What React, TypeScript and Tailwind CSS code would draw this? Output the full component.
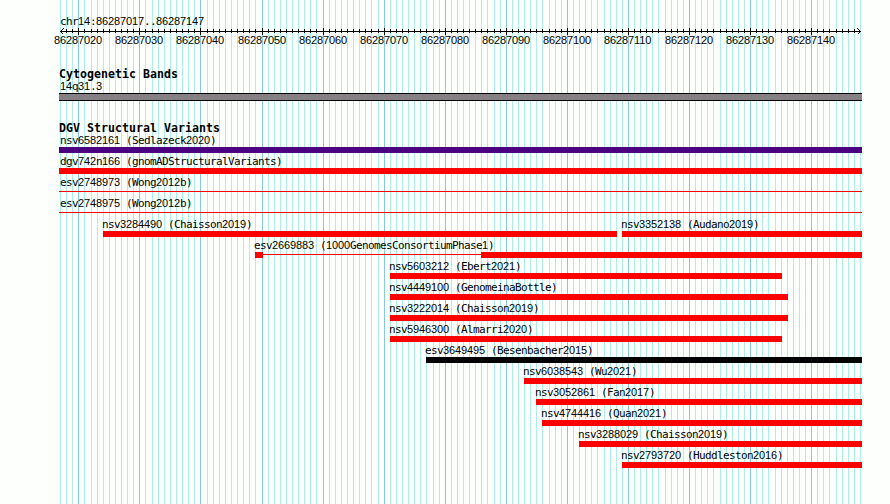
type Block = { from: number; to: number };
type Feature = { name: string; at: number; color: string; blocks: Block[]; line?: Block };

const ORIGIN = 60;
const SCALE = 800 / 131;
const bases = Array.from({ length: 132 }, (_, i) => i);
const xOf = (i: number) => Math.round(ORIGIN + i * SCALE);

const one = (name: string, from: number, to = 862, color = 'bg-[#ff0000]'): Feature => ({
  name,
  at: from,
  color,
  blocks: [{ from, to }],
});

const rows: Feature[][] = [
  [one('nsv6582161 (Sedlazeck2020)', 59, 862, 'bg-[#4b0082]')],
  [one('dgv742n166 (gnomADStructuralVariants)', 59)],
  [{ name: 'esv2748973 (Wong2012b)', at: 59, color: 'bg-[#ff0000]', blocks: [], line: { from: 59, to: 862 } }],
  [{ name: 'esv2748975 (Wong2012b)', at: 59, color: 'bg-[#ff0000]', blocks: [], line: { from: 59, to: 862 } }],
  [one('nsv3284490 (Chaisson2019)', 103, 617), one('nsv3352138 (Audano2019)', 622)],
  [
    {
      name: 'esv2669883 (1000GenomesConsortiumPhase1)',
      at: 255,
      color: 'bg-[#ff0000]',
      blocks: [
        { from: 255, to: 263 },
        { from: 481, to: 862 },
      ],
      line: { from: 263, to: 481 },
    },
  ],
  [one('nsv5603212 (Ebert2021)', 390, 782)],
  [one('nsv4449100 (GenomeinaBottle)', 390, 788)],
  [one('nsv3222014 (Chaisson2019)', 390, 788)],
  [one('nsv5946300 (Almarri2020)', 390, 782)],
  [one('esv3649495 (Besenbacher2015)', 426, 862, 'bg-[#000000]')],
  [one('nsv6038543 (Wu2021)', 524)],
  [one('nsv3052861 (Fan2017)', 536)],
  [one('nsv4744416 (Quan2021)', 542)],
  [one('nsv3288029 (Chaisson2019)', 579)],
  [one('nsv2793720 (Huddleston2016)', 622)],
];

// Digits use a face with an open zero, set to the same 6px pitch as the letters.
function Label({ text }: { text: string }) {
  return (
    <span className="block whitespace-pre font-['DejaVu_Sans_Mono',monospace] text-[11px] leading-[17px] tracking-[-0.622px] text-black">
      {text.split(/(\d+)/).map((part, i) =>
        i % 2 ? (
          <span key={i} className="font-['Liberation_Sans',sans-serif] tracking-[-0.117px]">
            {part}
          </span>
        ) : (
          part
        ),
      )}
    </span>
  );
}

function Title({ children }: { children: string }) {
  return (
    <h2 className="ml-[59px] h-[13px] whitespace-pre font-['DejaVu_Sans_Mono',monospace] text-[11.6px] font-bold leading-[15px] tracking-[0.017px] text-black">
      {children}
    </h2>
  );
}

function GridLines() {
  return (
    <svg className="absolute inset-0" width="890" height="504" shapeRendering="crispEdges">
      {bases.map((i) => (
        <rect key={i} x={xOf(i)} y="0" width="1" height="504" fill={i % 10 === 3 ? '#84c8ec' : '#aceeea'} />
      ))}
    </svg>
  );
}

function Axis() {
  return (
    <svg className="block" width="890" height="8" shapeRendering="crispEdges">
      <rect x="60" y="3" width="801" height="1" />
      {bases.slice(1, -1).map((i) => (
        <rect key={i} x={xOf(i)} y={i % 10 === 3 ? 0 : 1} width="1" height={i % 10 === 3 ? 7 : 4} />
      ))}
      <path d="M63.5 .5L60.5 3.5L63.5 6.5M857.5 .5L860.5 3.5L857.5 6.5" fill="none" stroke="#000" />
    </svg>
  );
}

function FeatureRow({ items }: { items: Feature[] }) {
  return (
    <div className="grid h-[21px]">
      {items.map((f) => (
        <div key={f.name} className="col-start-1 row-start-1">
          <div className="h-[15px]" style={{ marginLeft: Math.max(ORIGIN, f.at - 1) }}>
            <Label text={f.name} />
          </div>
          <div className="grid h-[6px]">
            {f.line && (
              <div
                className={`col-start-1 row-start-1 mt-[2px] h-px ${f.color}`}
                style={{ marginLeft: f.line.from, width: f.line.to - f.line.from }}
              />
            )}
            {f.blocks.map((b) => (
              <div
                key={b.from}
                className={`col-start-1 row-start-1 h-[6px] ${f.color}`}
                style={{ marginLeft: b.from, width: b.to - b.from }}
              />
            ))}
          </div>
        </div>
      ))}
    </div>
  );
}

export default function App() {
  return (
    <main className="relative h-[504px] w-[890px] overflow-hidden bg-[#fdfffc]">
      <GridLines />
      <div className="relative flex flex-col pt-[13px]">
        <div className="ml-[60px] h-[15px]">
          <Label text="chr14:86287017..86287147" />
        </div>
        <Axis />
        <div className="-mt-[4px] ml-[54px] flex h-[15px]">
          {Array.from({ length: 13 }, (_, i) => (
            <div key={i} className="shrink-0" style={{ width: xOf(13 + i * 10) - xOf(3 + i * 10) }}>
              <Label text={String(86287020 + i * 10)} />
            </div>
          ))}
        </div>
        <div className="mt-[20px]">
          <Title>Cytogenetic Bands</Title>
        </div>
        <div className="-mt-[2px] ml-[60px] h-[15px]">
          <Label text="14q31.3" />
        </div>
        <div className="ml-[59px] h-[8px] w-[803px] border-y border-black bg-[#848084]" />
        <div className="mt-[20px]">
          <Title>DGV Structural Variants</Title>
        </div>
        <div className="-mt-[2px]">
          {rows.map((items) => (
            <FeatureRow key={items[0].name} items={items} />
          ))}
        </div>
      </div>
    </main>
  );
}
